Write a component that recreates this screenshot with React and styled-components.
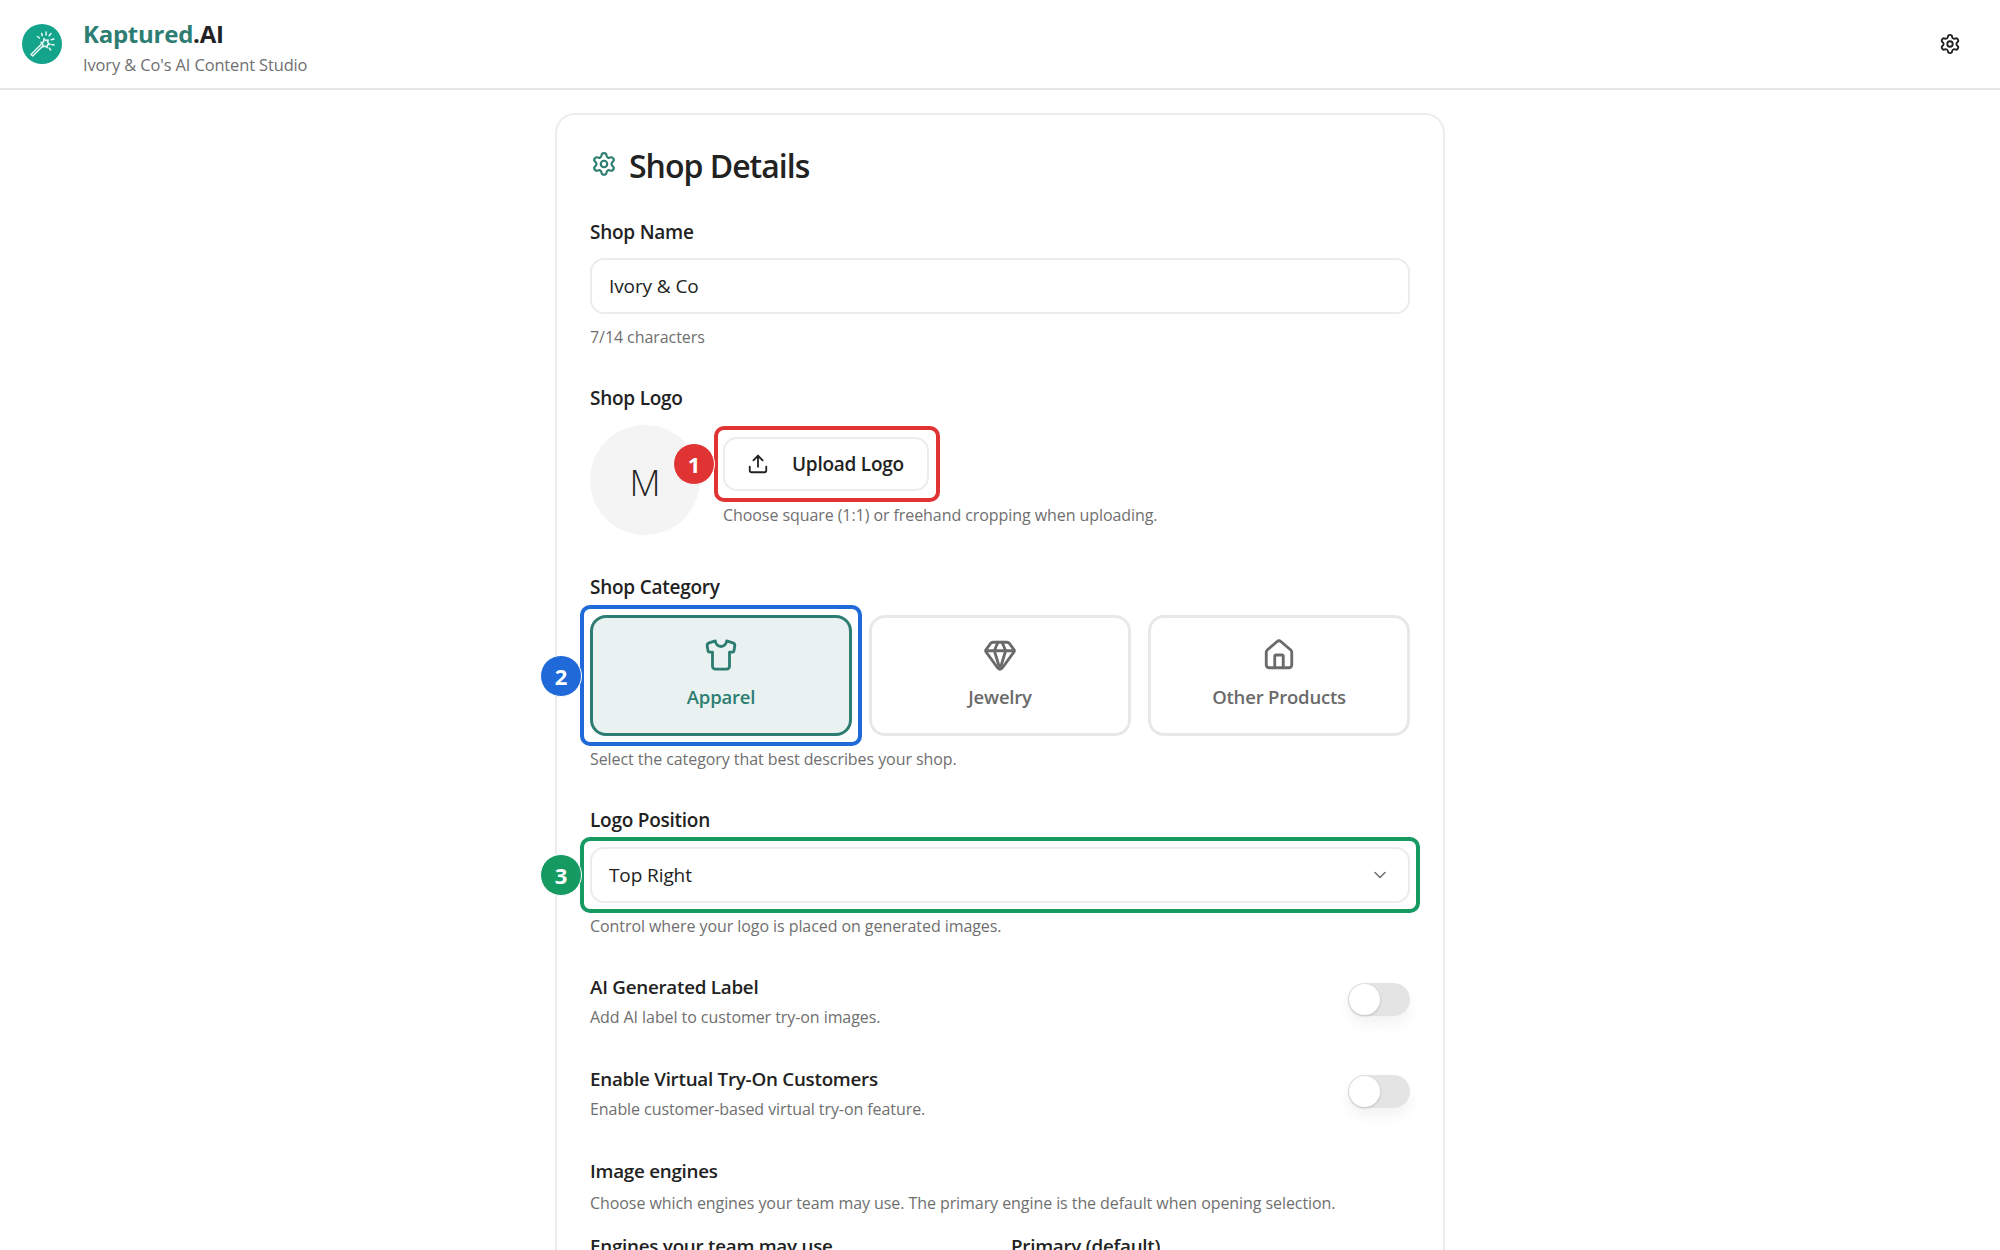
import styled, { createGlobalStyle } from 'styled-components'
import { Settings, Upload, Shirt, Gem, House, ChevronDown } from 'lucide-react'

const Global = createGlobalStyle`
  html, body { margin: 0; padding: 0; background: #fff; height: 100%; overflow: hidden; }
  * { box-sizing: border-box; }
  body { font-family: "Open Sans", "Noto Sans", sans-serif; color: #222; }
`

const Page = styled.div`
  height: 1250px;
  overflow: hidden;
`

const Header = styled.header`
  height: 90px;
  border-bottom: 2px solid #e5e5e5;
  display: flex;
  align-items: center;
  justify-content: space-between;
  padding: 0 39px 0 22px;
`

const Brand = styled.div`
  display: flex;
  align-items: center;
  gap: 21px;
`

const LogoMark = styled.div`
  width: 40px;
  height: 40px;
  border-radius: 50%;
  background: #14a38b;
  display: flex;
  align-items: center;
  justify-content: center;
`

const BrandText = styled.div`
  display: flex;
  flex-direction: column;
  gap: 5px;
  padding-top: 6px;
`

const Title = styled.div`
  font-size: 24px;
  line-height: 30px;
  font-weight: 700;
  letter-spacing: -0.25px;
  span { color: #2d7d72; }
`

const Subtitle = styled.div`
  font-size: 16.4px;
  line-height: 22px;
  color: #6f6f6f;
  letter-spacing: -0.1px;
`

const Main = styled.main`
  display: flex;
  justify-content: center;
  padding-top: 23px;
`

const Card = styled.section`
  width: 890px;
  height: 1400px;
  border: 2px solid #ececec;
  border-radius: 20px;
  padding: 29px 33px;
`

const CardTitle = styled.h1`
  margin: 0 0 32px;
  display: flex;
  align-items: center;
  gap: 12px;
  font-size: 32px;
  line-height: 44px;
  font-weight: 600;
  letter-spacing: -1px;
  color: #222;
  svg { color: #2d7d72; margin: -4px 0 0 1px; }
`

const Label = styled.div`
  font-size: ${p => (p.$small ? 18.8 : 19)}px;
  line-height: 24px;
  font-weight: 600;
  letter-spacing: -0.25px;
  color: #222;
`

const Help = styled.div`
  font-size: 16px;
  line-height: 22px;
  color: #6f6f6f;
  letter-spacing: -0.07px;
`

const Field = styled.div`
  margin-bottom: ${p => p.$mb}px;
`

const Control = styled.div`
  height: 56px;
  margin: ${p => p.$margin};
  padding: 0 18px 0 17px;
  border: 2px solid #ececec;
  border-radius: 14px;
  display: flex;
  align-items: center;
  justify-content: space-between;
  font-size: 19px;
  letter-spacing: -0.1px;
  color: #222;
  background: #fff;
  svg { color: #6f6f6f; }
`

const LogoRow = styled.div`
  display: flex;
  align-items: center;
  gap: 23px;
  margin-top: 15px;
`

const Avatar = styled.div`
  width: 110px;
  height: 110px;
  flex: none;
  border-radius: 50%;
  background: #f4f4f4;
  display: flex;
  align-items: center;
  justify-content: center;
  font-size: 36px;
  font-weight: 300;
  color: #222;
  padding-top: 4px;
`

const LogoActions = styled.div`
  display: flex;
  flex-direction: column;
  align-items: flex-start;
  gap: 13px;
  padding-top: 2px;
`

const Marked = styled.div`
  position: relative;
`

const Ring = styled.div`
  position: absolute;
  inset: ${p => p.$inset};
  border: 4px solid ${p => p.$color};
  border-radius: 10px;
  pointer-events: none;
`

const Badge = styled.div`
  position: absolute;
  top: 50%;
  left: ${p => p.$left}px;
  width: 42px;
  height: 42px;
  margin-top: -21px;
  border-radius: 50%;
  border: 1.5px solid #fff;
  background: ${p => p.$color};
  color: #fff;
  font-size: 22px;
  font-weight: 700;
  display: flex;
  align-items: center;
  justify-content: center;
`

const UploadButton = styled.div`
  width: 206px;
  height: 54px;
  border: 2px solid #ececec;
  border-radius: 14px;
  background: #fff;
  display: flex;
  align-items: center;
  gap: 23px;
  padding-left: 22px;
  font-size: 19px;
  font-weight: 600;
  letter-spacing: -0.25px;
  color: #222;
`

const Categories = styled.div`
  display: grid;
  grid-template-columns: repeat(3, 1fr);
  gap: 17px;
  margin: 16px 0 12px;
`

const Category = styled.div`
  height: 121px;
  border: 3px solid ${p => (p.$active ? '#2d7d72' : '#e8e8e8')};
  border-radius: 16px;
  background: ${p => (p.$active ? '#e9f2f0' : '#fff')};
  color: ${p => (p.$active ? '#2d7d72' : '#6a6a6a')};
  display: flex;
  flex-direction: column;
  align-items: center;
  justify-content: center;
  gap: 12px;
  font-size: 18.5px;
  font-weight: 600;
  letter-spacing: -0.2px;
  padding-bottom: 4px;
`

const ToggleRow = styled.div`
  display: flex;
  align-items: center;
  justify-content: space-between;
  margin-bottom: 39px;
`

const ToggleText = styled.div`
  display: flex;
  flex-direction: column;
  gap: ${p => p.$gap || 7}px;
`

const Toggle = styled.div`
  width: 62px;
  height: 33px;
  margin-top: -5px;
  border-radius: 17px;
  background: #e4e4e4;
  box-shadow: 0 8px 14px rgba(0, 0, 0, 0.05);
  position: relative;
  &::after {
    content: '';
    position: absolute;
    left: 1px;
    top: 1px;
    width: 31px;
    height: 31px;
    border-radius: 50%;
    background: #fff;
    box-shadow: 0 1px 3px rgba(0, 0, 0, 0.18);
  }
`

const EngineColumns = styled.div`
  display: grid;
  grid-template-columns: 1fr 1fr;
  gap: 22px;
  margin-top: 20px;
`

function WandIcon() {
  return (
    <svg width="30" height="30" viewBox="0 0 30 30" fill="none" stroke="#e6f7f3" strokeWidth="1.5" strokeLinecap="round" strokeLinejoin="round">
      <path d="M4 25.5 14 15.5M5.8 27 15.6 17.2M4 25.5 5.8 27" />
      <path d="M17 9.5 18.6 11.6 21.2 11 20.6 13.6 22.8 15.2 20.3 16 20.1 18.6 18 17 15.6 18 15.9 15.4 14 13.6 16.6 13Z" />
      <path d="M14.6 4.5 15.2 6.8M19.2 3 19 6M24 4.5 22.2 6.8M27 10 24.2 10.8M27 16 24.6 15.4M23.6 21 22.2 19M10.5 7.5 12.4 9" />
    </svg>
  )
}

export default function App() {
  return (
    <Page>
      <Global />
      <Header>
        <Brand>
          <LogoMark><WandIcon /></LogoMark>
          <BrandText>
            <Title><span>Kaptured</span>.AI</Title>
            <Subtitle>Ivory &amp; Co's AI Content Studio</Subtitle>
          </BrandText>
        </Brand>
        <Settings size={22} color="#222" strokeWidth={2} />
      </Header>
      <Main>
        <Card>
          <CardTitle><Settings size={26} strokeWidth={2} />Shop Details</CardTitle>

          <Field $mb={38}>
            <Label>Shop Name</Label>
            <Control $margin="14px 0 12px">Ivory &amp; Co</Control>
            <Help>7/14 characters</Help>
          </Field>

          <Field $mb={40}>
            <Label>Shop Logo</Label>
            <LogoRow>
              <Avatar>M</Avatar>
              <LogoActions>
                <Marked>
                  <Ring $inset="-11px -11px -11px -9px" $color="#e03434" />
                  <Badge $left={-50} $color="#e03434">1</Badge>
                  <UploadButton><Upload size={22} strokeWidth={2} />Upload Logo</UploadButton>
                </Marked>
                <Help>Choose square (1:1) or freehand cropping when uploading.</Help>
              </LogoActions>
            </LogoRow>
          </Field>

          <Field $mb={38}>
            <Label>Shop Category</Label>
            <Categories>
              <Marked>
                <Ring $inset="-10px" $color="#1f6ad8" />
                <Badge $left={-50} $color="#1f6ad8">2</Badge>
                <Category $active><Shirt size={34} strokeWidth={2} />Apparel</Category>
              </Marked>
              <Category><Gem size={34} strokeWidth={2} />Jewelry</Category>
              <Category><House size={34} strokeWidth={2} />Other Products</Category>
            </Categories>
            <Help>Select the category that best describes your shop.</Help>
          </Field>

          <Field $mb={38}>
            <Label>Logo Position</Label>
            <Marked>
              <Ring $inset="-10px" $color="#159a62" />
              <Badge $left={-50} $color="#159a62">3</Badge>
              <Control $margin="15px 0 12px">Top Right<ChevronDown size={20} strokeWidth={1.8} /></Control>
            </Marked>
            <Help>Control where your logo is placed on generated images.</Help>
          </Field>

          <ToggleRow>
            <ToggleText>
              <Label $small>AI Generated Label</Label>
              <Help>Add AI label to customer try-on images.</Help>
            </ToggleText>
            <Toggle />
          </ToggleRow>

          <ToggleRow>
            <ToggleText>
              <Label $small>Enable Virtual Try-On Customers</Label>
              <Help>Enable customer-based virtual try-on feature.</Help>
            </ToggleText>
            <Toggle />
          </ToggleRow>

          <ToggleText $gap={9}>
            <Label $small>Image engines</Label>
            <Help>Choose which engines your team may use. The primary engine is the default when opening selection.</Help>
          </ToggleText>
          <EngineColumns>
            <Label $small>Engines your team may use</Label>
            <Label $small>Primary (default)</Label>
          </EngineColumns>
        </Card>
      </Main>
    </Page>
  )
}
